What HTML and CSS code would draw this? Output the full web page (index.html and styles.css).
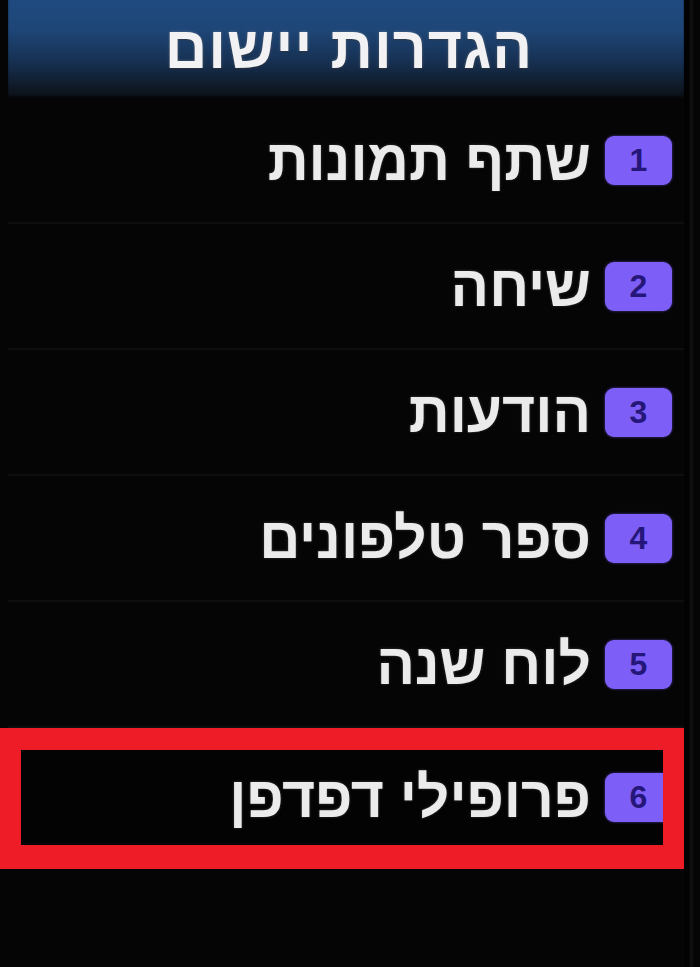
FILE: index.html
```html
<!DOCTYPE html>
<html lang="he" dir="rtl">
<head>
<meta charset="utf-8">
<title>הגדרות יישום</title>
<link rel="stylesheet" href="styles.css">
</head>
<body>
<div class="screen">
  <div class="panel">
    <div class="header"><span class="title">הגדרות יישום</span></div>
    <ul class="menu">
      <li class="item"><span class="badge">1</span><span class="label">שתף תמונות</span></li>
      <li class="item"><span class="badge">2</span><span class="label">שיחה</span></li>
      <li class="item"><span class="badge">3</span><span class="label">הודעות</span></li>
      <li class="item"><span class="badge">4</span><span class="label">ספר טלפונים</span></li>
      <li class="item"><span class="badge">5</span><span class="label">לוח שנה</span></li>
      <li class="item selected"><span class="badge">6</span><span class="label">פרופילי דפדפן</span></li>
    </ul>
  </div>
  <div class="edge"></div>
</div>
</body>
</html>
```
FILE: styles.css
```css
html, body {
  margin: 0;
  padding: 0;
  background: #030303;
}
body {
  width: 700px;
  height: 967px;
  overflow: hidden;
  font-family: "Liberation Sans", "DejaVu Sans", sans-serif;
}
.screen {
  display: flex;
  flex-direction: row;
  height: 967px;
  direction: ltr;
}
.panel {
  width: 684px;
  flex: none;
  direction: rtl;
  background: #050505;
}
.edge {
  flex: 1;
  background: linear-gradient(to right, #020202 0, #020202 5px, #0e0e10 6px, #0e0e10 9px, #050505 10px);
}
.header {
  height: 98px;
  margin-left: 8px;
  display: flex;
  align-items: center;
  justify-content: center;
  padding-left: 6px;
  background: linear-gradient(to bottom, #1f4a80 0%, #1e4677 30%, #162f50 65%, #0f1a28 88%, #0b0f15 100%);
  box-shadow: inset 0 -2px 2px rgba(0,0,0,0.5);
}
.title {
  color: #f2f2f4;
  font-weight: bold;
  font-size: 59px;
  line-height: 1;
  margin-top: -2px;
  letter-spacing: 1px;
  text-shadow: 0 0 3px rgba(255,255,255,0.3), 0 1px 2px rgba(0,0,0,0.6);
}
.menu {
  list-style: none;
  margin: 0;
  padding: 0;
}
.item {
  height: 126px;
  box-sizing: border-box;
  margin-left: 8px;
  display: flex;
  align-items: center;
  gap: 14px;
  padding-right: 12px;
  border-bottom: 2px solid #0e0e0e;
}
.badge {
  width: 67px;
  height: 49px;
  flex: none;
  border-radius: 9px;
  background: #7d5ef6;
  color: #25167a;
  font-weight: bold;
  font-size: 32px;
  display: flex;
  align-items: center;
  justify-content: center;
  box-shadow: 0 0 3px rgba(120,90,250,0.6);
}
.label {
  color: #ebebeb;
  font-weight: bold;
  font-size: 57px;
  line-height: 1;
  white-space: nowrap;
  text-shadow: 0 0 3px rgba(255,255,255,0.25), 0 2px 2px rgba(0,0,0,0.8);
}
.item.selected {
  height: 141px;
  margin-left: 0;
  border: 21px solid #ee1c27;
  border-top-width: 22px;
  border-bottom-width: 24px;
  padding-right: 0;
  overflow: hidden;
  background: #030303;
}
.item.selected .badge {
  margin-right: -9px;
}
```
